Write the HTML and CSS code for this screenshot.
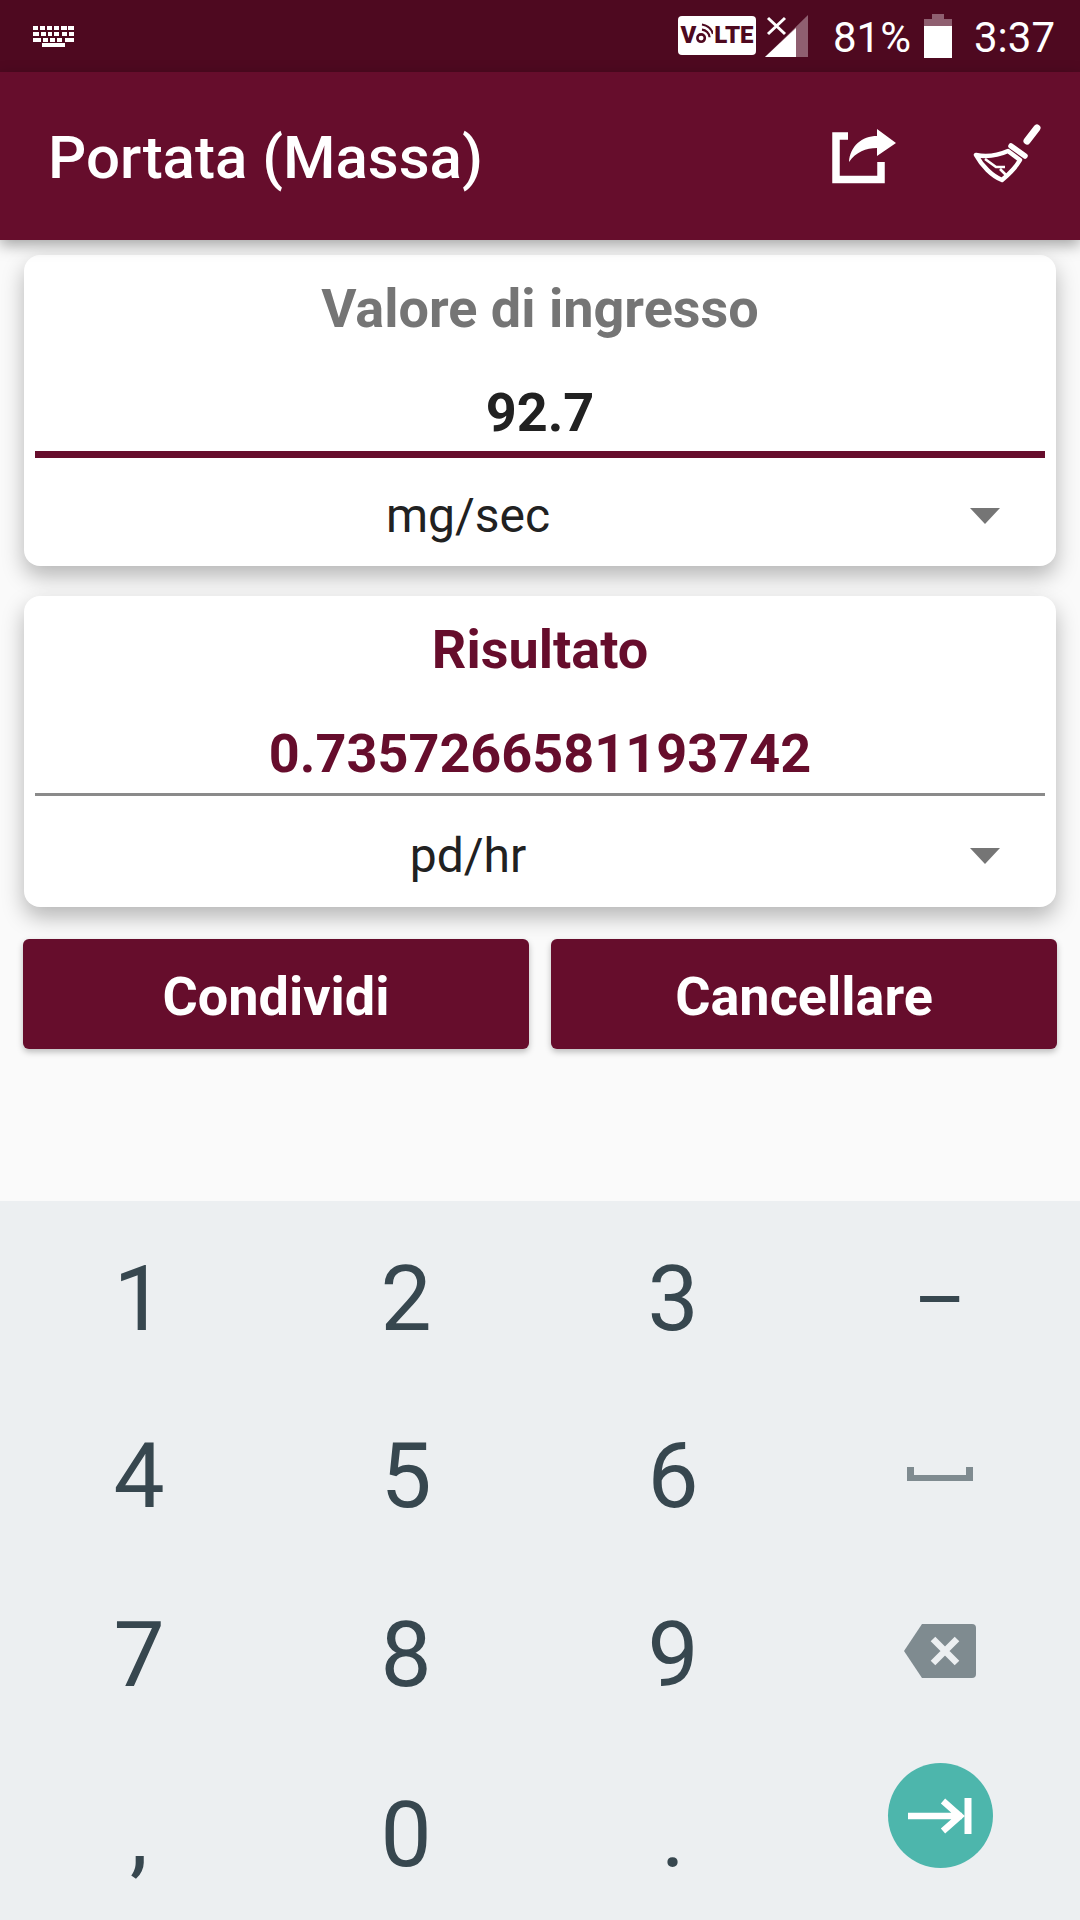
FILE: index.html
```html
<!DOCTYPE html>
<html lang="it">
<head>
<meta charset="utf-8">
<title>Portata (Massa)</title>
<link rel="stylesheet" href="styles.css">
</head>
<body>
<div class="phone">
  <div class="statusbar">
    <svg class="kb-icon" viewBox="0 0 41 21"><g fill="#fff"><rect x="0" y="0" width="5" height="4"/><rect x="7" y="0" width="5" height="4"/><rect x="14" y="0" width="5" height="4"/><rect x="21" y="0" width="5" height="4"/><rect x="28" y="0" width="6" height="4"/><rect x="35" y="0" width="6" height="4"/><rect x="0" y="6" width="6" height="4"/><rect x="8" y="6" width="5" height="4"/><rect x="15" y="6" width="4" height="4"/><rect x="21" y="6" width="5" height="4"/><rect x="29" y="6" width="5" height="4"/><rect x="36" y="6" width="5" height="4"/><rect x="0" y="12" width="8" height="4"/><rect x="10" y="12" width="5" height="4"/><rect x="17" y="12" width="5" height="4"/><rect x="24" y="12" width="5" height="4"/><rect x="32" y="12" width="9" height="4"/><rect x="9" y="17" width="23" height="4"/></g></svg>
    <div class="status-right">
      <div class="volte">
        <span>V</span>
        <svg class="volte-o" viewBox="0 0 20 26"><circle cx="6" cy="19" r="4.4" fill="none" stroke="#4e0920" stroke-width="3"/><path d="M7 9a10 10 0 0 1 9 9M7 3a16 16 0 0 1 13 11" fill="none" stroke="#4e0920" stroke-width="2.6"/></svg>
        <span class="volte-lte">LTE</span>
      </div>
      <svg class="signal" viewBox="0 0 43 42"><path d="M43 0V42H0Z" fill="#8f5f70"/><path d="M31 13V42H0Z" fill="#fff"/><path d="M3 3L20 19M20 3L3 19" stroke="#4e0920" stroke-width="7"/><path d="M3 3L20 19M20 3L3 19" stroke="#fff" stroke-width="3"/></svg>
      <span class="status-text pct">81%</span>
      <svg class="battery" viewBox="0 0 28 44"><path d="M8 0H20V5H28V44H0V5H8Z" fill="#8f5f70"/><path d="M0 12H28V44H0Z" fill="#fff"/></svg>
      <span class="status-text clock">3:37</span>
    </div>
  </div>

  <header class="appbar">
    <h1 class="title">Portata (Massa)</h1>
    <svg class="share-icon" viewBox="0 0 85 72"><path d="M26 16H14V59.5H59V42" fill="none" stroke="#fff" stroke-width="7.5"/><path d="M27 42C28 26 40 16 55 16V9L74 23 55 36V28C44 28 34 32 27 42Z" fill="#fff"/></svg>
    <svg class="broom-icon" viewBox="0 0 85 76"><path d="M72 10L62 23" stroke="#fff" stroke-width="7" stroke-linecap="round"/><path d="M46 28L60 38" stroke="#fff" stroke-width="5.5" stroke-linecap="round"/><path d="M11 37C22 39 34 37 43 33L55 42C51 49 43 57 37 62C27 58 17 48 11 37Z" fill="none" stroke="#fff" stroke-width="4.5" stroke-linejoin="round"/><path d="M20 41L31 49L40 49M35 51L42 58" fill="none" stroke="#fff" stroke-width="2.6"/></svg>
  </header>

  <main class="content">
    <section class="card">
      <h2 class="card-title">Valore di ingresso</h2>
      <div class="value value-input">92.7</div>
      <div class="picker"><span class="picker-text">mg/sec</span><span class="picker-arrow"></span></div>
    </section>
    <section class="card card-result">
      <h2 class="card-title">Risultato</h2>
      <div class="value value-result">0.7357266581193742</div>
      <div class="picker"><span class="picker-text">pd/hr</span><span class="picker-arrow"></span></div>
    </section>
    <div class="actions">
      <button class="btn">Condividi</button>
      <button class="btn">Cancellare</button>
    </div>
  </main>

  <section class="keyboard">
    <div class="key">1</div><div class="key">2</div><div class="key">3</div><div class="key key-dash">–</div>
    <div class="key">4</div><div class="key">5</div><div class="key">6</div>
    <div class="key"><svg class="space-icon" viewBox="0 0 66 14"><path d="M0 0H7V8H59V0H66V14H0Z" fill="#7f8b90"/></svg></div>
    <div class="key">7</div><div class="key">8</div><div class="key">9</div>
    <div class="key"><svg class="back-icon" viewBox="0 0 72 54"><path d="M18 0H68Q72 0 72 4V50Q72 54 68 54H18L0 27Z" fill="#7f8b90"/><path d="M29 15L53 39M53 15L29 39" stroke="#eceff1" stroke-width="6.5"/></svg></div>
    <div class="key key-low">,</div><div class="key key-low">0</div><div class="key key-low">.</div>
    <div class="key key-low"><div class="tab-key"><svg class="tab-icon" viewBox="0 0 64 36"><path d="M0 18H54M35 3L52 18 35 33" fill="none" stroke="#fff" stroke-width="6.5"/><path d="M60 0V36" stroke="#fff" stroke-width="7"/></svg></div></div>
  </section>
</div>
</body>
</html>
```

FILE: styles.css
```css
* { box-sizing: border-box; }
html, body { margin: 0; padding: 0; }
body { font-family: Roboto, "Liberation Sans", sans-serif; background: #fafafa; }
.phone { width: 1080px; height: 1920px; display: flex; flex-direction: column; overflow: hidden; }

.statusbar { height: 72px; flex: none; background: #4e0920; display: flex; align-items: center; justify-content: space-between; padding: 0 25px 0 33px; }
.kb-icon { width: 41px; height: 21px; margin-top: 1px; }
.status-right { display: flex; align-items: center; }
.volte { width: 78px; height: 39px; margin-top: -2px; background: #fff; border-radius: 4px; display: flex; align-items: center; justify-content: center; color: #4e0920; font-size: 24px; font-weight: 900; line-height: 1; }
.volte-o { width: 17px; height: 26px; margin-top: -4px; }
.volte-lte { margin-left: 1px; }
.signal { width: 43px; height: 42px; margin: 0 25px 0 9px; }
.status-text { color: #fff; font-size: 42px; line-height: 1; padding-top: 4px; }
.battery { width: 28px; height: 44px; margin: 0 22px 0 13px; }

.appbar { height: 168px; flex: none; background: #660d2c; display: flex; align-items: center; padding: 0 30px 0 48px; box-shadow: 0 5px 14px rgba(0, 0, 0, .35); position: relative; z-index: 2; }
.title { margin: 3px auto 0 0; color: #fff; font-size: 60px; font-weight: 500; line-height: 1; }
.share-icon { width: 85px; height: 72px; margin-right: 58px; filter: blur(.6px); }
.broom-icon { width: 85px; height: 76px; filter: blur(.6px); }

.content { flex: 1; display: flex; flex-direction: column; padding: 15px 23px 0; }
.card { margin: 0 1px 30px; height: 311px; background: #fff; border-radius: 16px; padding: 0 11px; box-shadow: 0 10px 22px rgba(0, 0, 0, .28); display: flex; flex-direction: column; position: relative; }
.card-title { margin: 23px 0 0; height: 62px; text-align: center; font-size: 54px; line-height: 62px; font-weight: 700; color: #757575; }
.card-result .card-title { color: #660d2c; }
.value { padding-top: 41px; text-align: center; font-size: 54px; line-height: 64px; font-weight: 700; }
.value-input { color: #212121; border-bottom: 7px solid #660d2c; height: 118px; }
.value-result { color: #660d2c; border-bottom: 3px solid #8a8a8a; height: 115px; }
.picker { flex: 1; display: flex; align-items: center; padding-top: 10px; }
.picker-text { width: 866px; text-align: center; font-size: 48px; color: #212121; line-height: 1; margin-top: -2px; }
.picker-arrow { margin-left: 69px; width: 0; height: 0; border-left: 15px solid transparent; border-right: 15px solid transparent; border-top: 16px solid #757575; margin-top: -2px; }

.actions { display: grid; grid-template-columns: 506px 506px; gap: 22px; margin-top: 2px; }
.btn { height: 110px; border: 0; border-radius: 6px; background: #660d2c; color: #fff; font-family: inherit; font-size: 54px; font-weight: 700; box-shadow: 0 3px 6px rgba(0, 0, 0, .25); padding: 4px 0 0; }

.keyboard { height: 719px; flex: none; background: #eceff1; display: grid; grid-template-columns: repeat(4, 267px); grid-template-rows: 177px 177px 180px 177px; padding: 8px 4.5px 0 5.5px; }
.key { display: flex; align-items: center; justify-content: center; color: #37474f; font-size: 91px; line-height: 1; padding-top: 4px; }
.key-low { padding-top: 8.5px; }
.key-dash { font-size: 80px; }
.space-icon { width: 66px; height: 14px; margin-top: -5px; }
.back-icon { width: 72px; height: 54px; margin-top: -8px; }
.tab-key { width: 105px; height: 105px; margin-bottom: 40px; border-radius: 50%; background: #4db6ac; display: flex; align-items: center; justify-content: center; }
.tab-icon { width: 64px; height: 36px; }
```
